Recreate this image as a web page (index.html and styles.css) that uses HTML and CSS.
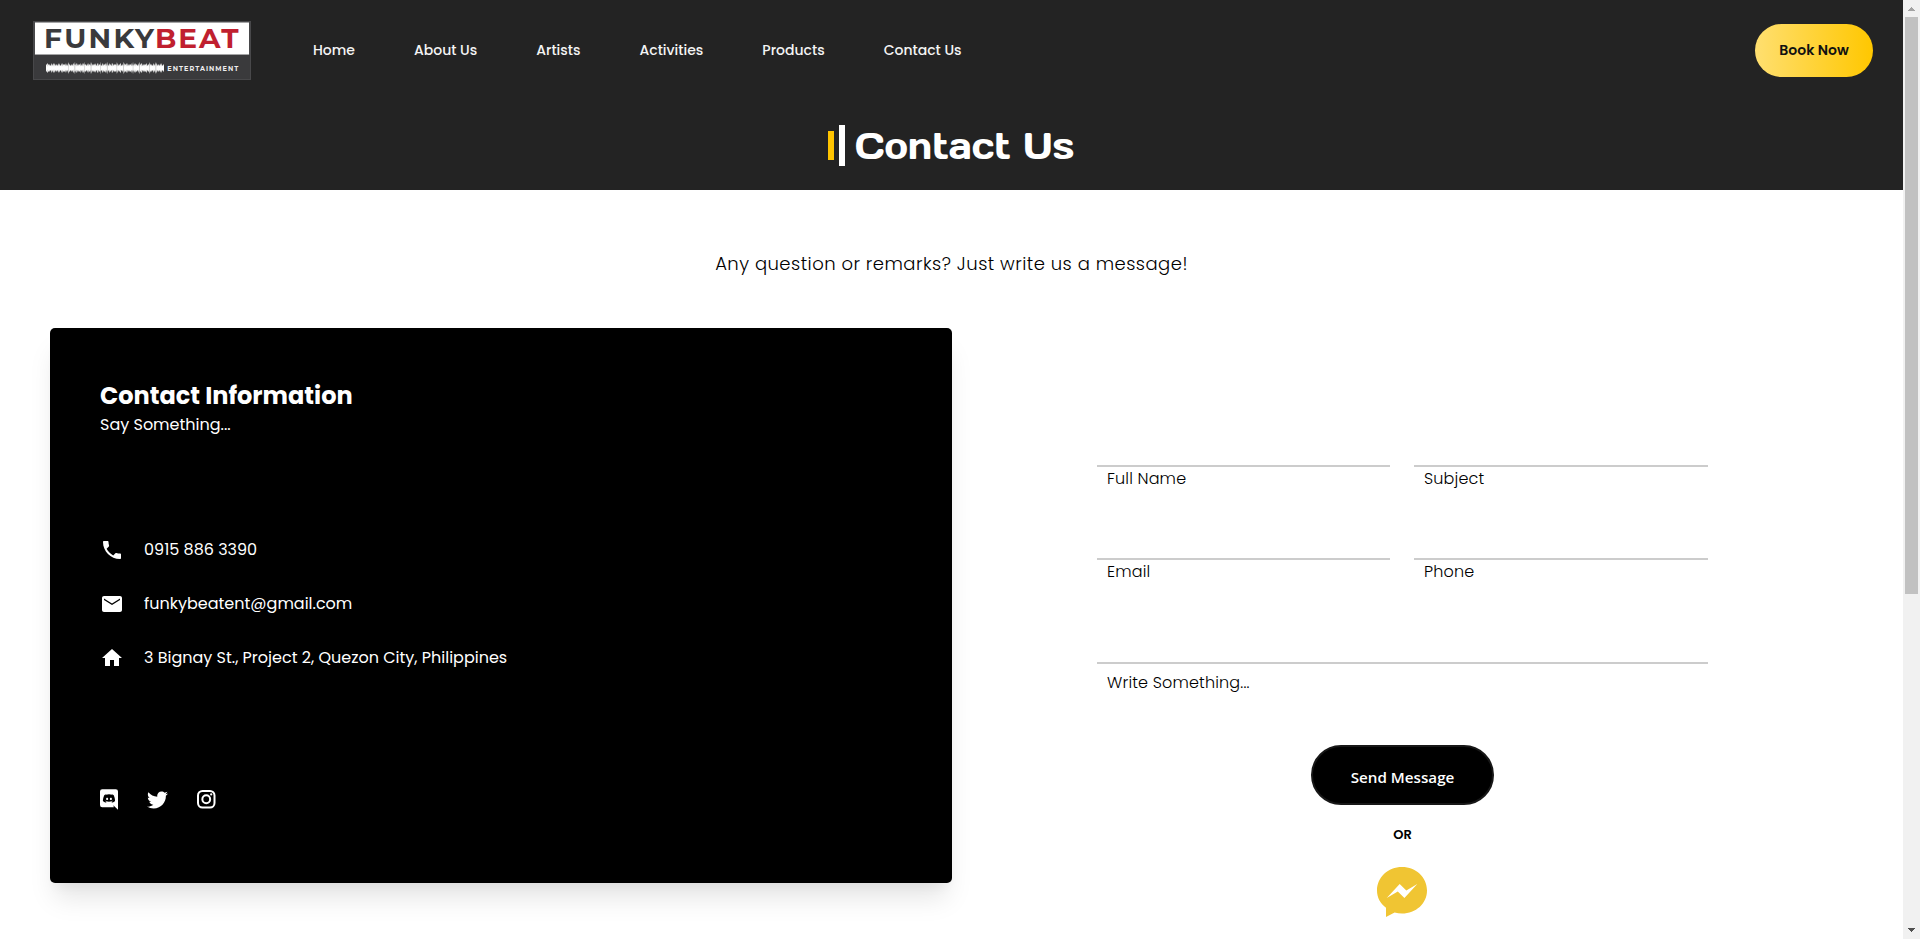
FILE: index.html
```
<!DOCTYPE html>
<html lang="en">
<head>
<meta charset="utf-8">
<title>Contact Us</title>
<link rel="stylesheet" href="styles.css">
</head>
<body>
<div class="page">
  <header class="header">
    <div class="topbar">
      <svg class="logo" width="218" height="59" viewBox="0 0 218 59" role="img" aria-label="Funkybeat Entertainment">
        <rect width="218" height="59" fill="#48484a"/>
        <rect x="1" y="34" width="216" height="24" fill="#3a3a3c"/>
        <rect x="2" y="1.500" width="214" height="32" fill="#fff"/>
        <text class="logo-word logo-dark" x="11" y="27.300" textLength="110" lengthAdjust="spacing">FUNKY</text>
        <text class="logo-word logo-red" x="122" y="27.300" textLength="83.500" lengthAdjust="spacing">BEAT</text>
        <path d="M13 47H131" stroke="#fff" stroke-width="5"/>
        <path d="M13 47H131" stroke="#f4f4f4" stroke-width="7" stroke-dasharray="1 .7 2 1.200 1 .5 3 .8"/>
        <path d="M14 47H130" stroke="#ddd" stroke-width="9" stroke-dasharray="1 3 .6 1.700 1.200 4 .8 2.300"/>
        <path d="M13 47H131" stroke="#fff" stroke-width="3.500"/>
        <path d="M35 47H128" stroke="#bbb" stroke-width="11" stroke-dasharray=".5 6 .7 9"/>
        <text class="logo-sub" x="134.300" y="49.500" textLength="71" lengthAdjust="spacing">ENTERTAINMENT</text>
      </svg>
      <nav class="nav">
        <a>Home</a>
        <a>About Us</a>
        <a>Artists</a>
        <a>Activities</a>
        <a>Products</a>
        <a>Contact Us</a>
      </nav>
      <a class="book">Book Now</a>
    </div>
    <div class="title-row">
      <span class="bar bar-short"></span>
      <span class="bar bar-tall"></span>
      <h1 class="title">Contact Us</h1>
    </div>
  </header>

  <p class="lead">Any question or remarks? Just write us a message!</p>

  <main class="columns">
    <section class="card">
      <h2 class="card-title">Contact Information</h2>
      <p>Say Something...</p>
      <ul class="details">
        <li><svg class="icon" viewBox="0 0 24 24"><path d="M6.62 10.790c1.440 2.830 3.760 5.140 6.590 6.590l2.200-2.200c.27-.27.67-.36 1.020-.24 1.120.37 2.330.57 3.570.57.55 0 1 .45 1 1V20c0 .55-.45 1-1 1-9.390 0-17-7.610-17-17 0-.55.45-1 1-1h3.500c.55 0 1 .45 1 1 0 1.250.2 2.450.57 3.570.11.35.03.74-.25 1.020l-2.200 2.200z"/></svg><span>0915 886 3390</span></li>
        <li><svg class="icon" viewBox="0 0 24 24"><path d="M20 4H4c-1.100 0-1.990.9-1.990 2L2 18c0 1.100.9 2 2 2h16c1.100 0 2-.9 2-2V6c0-1.100-.9-2-2-2zm0 4l-8 5-8-5V6.500l8 5 8-5V8z"/></svg><span>funkybeatent@gmail.com</span></li>
        <li><svg class="icon" viewBox="0 0 24 24"><path d="M10 20v-6h4v6h5v-8h3L12 3 2 12h3v8z"/></svg><span>3 Bignay St., Project 2, Quezon City, Philippines</span></li>
      </ul>
      <div class="social">
        <svg class="discord" viewBox="2 1 20 23"><path d="M22,24L16.750,19L17.380,21H4.500A2.500,2.500 0 0,1 2,18.500V3.500A2.500,2.500 0 0,1 4.500,1H19.500A2.500,2.500 0 0,1 22,3.500V24M12,6.800C9.320,6.800 7.440,7.950 7.440,7.950C8.470,7.030 10.270,6.500 10.270,6.500L10.100,6.330C8.410,6.360 6.880,7.530 6.880,7.530C5.160,11.120 5.270,14.220 5.270,14.220C6.670,16.030 8.750,15.900 8.750,15.900L9.460,15C8.210,14.730 7.420,13.620 7.420,13.620C7.420,13.620 9.300,14.900 12,14.900C14.700,14.900 16.580,13.620 16.580,13.620C16.580,13.620 15.790,14.730 14.540,15L15.250,15.900C15.250,15.900 17.330,16.030 18.730,14.220C18.730,14.220 18.840,11.120 17.120,7.530C17.120,7.530 15.590,6.360 13.900,6.330L13.730,6.500C13.730,6.500 15.530,7.030 16.560,7.950C16.560,7.950 14.680,6.800 12,6.800M9.930,10.590C10.580,10.590 11.110,11.160 11.100,11.860C11.100,12.550 10.580,13.130 9.930,13.130C9.290,13.130 8.770,12.550 8.770,11.860C8.770,11.160 9.280,10.590 9.930,10.590M14.100,10.590C14.750,10.590 15.270,11.160 15.270,11.860C15.270,12.550 14.750,13.130 14.100,13.130C13.460,13.130 12.940,12.550 12.940,11.860C12.940,11.160 13.450,10.590 14.100,10.590Z"/></svg>
        <svg class="twitter" viewBox="0 2 24 20"><path d="M23.954 4.569c-.885.389-1.830.654-2.825.775 1.014-.611 1.794-1.574 2.163-2.723-.951.555-2.005.959-3.127 1.184-.896-.959-2.173-1.559-3.591-1.559-2.717 0-4.920 2.203-4.920 4.917 0 .39.045.765.127 1.124C7.691 8.094 4.066 6.130 1.640 3.161c-.427.722-.666 1.561-.666 2.475 0 1.710.87 3.213 2.188 4.096-.807-.026-1.566-.248-2.228-.616v.061c0 2.385 1.693 4.374 3.946 4.827-.413.111-.849.171-1.296.171-.314 0-.615-.030-.916-.086.631 1.953 2.445 3.377 4.604 3.417-1.680 1.319-3.809 2.105-6.102 2.105-.39 0-.779-.023-1.170-.067 2.189 1.394 4.768 2.209 7.557 2.209 9.054 0 13.999-7.496 13.999-13.986 0-.209 0-.42-.015-.63.961-.689 1.800-1.560 2.460-2.548l-.047-.020z"/></svg>
        <svg class="instagram" viewBox="0 0 19 19"><rect x="1" y="1" width="16.500" height="16.500" rx="4.500"/><circle cx="9.250" cy="9.250" r="3.900"/><circle class="dot" cx="14.200" cy="4.400" r="1.150"/></svg>
      </div>
    </section>

    <form class="form">
      <div class="fields">
        <label class="field"><span class="line"></span><span class="name">Full Name</span></label>
        <label class="field"><span class="line"></span><span class="name">Subject</span></label>
        <label class="field"><span class="line"></span><span class="name">Email</span></label>
        <label class="field"><span class="line"></span><span class="name">Phone</span></label>
      </div>
      <label class="field message"><span class="line"></span><span class="name">Write Something...</span></label>
      <button class="send" type="button">Send Message</button>
      <p class="or">OR</p>
      <svg class="messenger" viewBox="0 0 50 50"><path fill="#f0c533" d="M25 0C11 0 0 10.200 0 23.500c0 7 3.300 13 9 17.200V50l8.600-4.500c2.400.6 4.900.9 7.400.9 14 0 25-10 25-23S39 0 25 0z"/><path fill="#fff" d="M9.700 30.900 22.700 17l6.600 6.600L40.300 17 27.400 30.900l-6.600-6.400z"/></svg>
    </form>
  </main>
</div>
<aside class="scrollbar">
  <svg class="arrow" width="7" height="4" viewBox="0 0 7 4" shape-rendering="crispEdges"><path fill="#a3a3a3" d="M3 0h1v1h1v1h1v1h1v1H0V3h1V2h1V1h1z"/></svg>
  <span class="thumb"></span>
  <svg class="arrow arrow-down" width="7" height="4" viewBox="0 0 7 4" shape-rendering="crispEdges"><path fill="#505050" d="M0 0h7v1H6v1H5v1H4v1H3V3H2V2H1V1H0z"/></svg>
</aside>
</body>
</html>
```

FILE: styles.css
```
* { box-sizing: border-box; }
body {
  margin: 0;
  height: 939px;
  overflow: hidden;
  display: flex;
  background: #fff;
  color: #000;
  font-family: Poppins, Inter, sans-serif;
  font-size: 16px;
  line-height: 24px;
}
h1, h2, p, ul { margin: 0; padding: 0; }
.page { flex: 1; min-width: 0; }

.header { height: 190px; background: #232323; color: #fff; }
.topbar { display: flex; align-items: center; height: 100px; padding: 0 30px 0 33px; }
.logo { flex: none; }
.logo-word { font: 700 28px Montserrat, Inter, sans-serif; }
.logo-dark { fill: #3a3a3c; }
.logo-red { fill: #c01f2f; }
.logo-sub { font: 700 6.500px Montserrat, Inter, sans-serif; fill: #eee; }
.nav { display: flex; flex: 1; gap: 59px; padding-left: 62px; font-size: 14px; font-weight: 500; color: #f4f4f4; }
.nav a { flex: none; white-space: nowrap; }
.book {
  width: 118px;
  height: 53px;
  margin-top: 1px;
  border-radius: 27px;
  background: linear-gradient(90deg, #ffdf70, #ffc700);
  color: #111;
  font-size: 14px;
  font-weight: 600;
  line-height: 53px;
  text-align: center;
}
.title-row { display: flex; align-items: center; height: 91px; padding-left: 828px; }
.bar { width: 6px; margin-right: 5px; }
.bar-short { height: 29px; background: #ffc400; }
.bar-tall { height: 41px; margin-right: 10px; background: #fff; }
.title { padding-top: 1px; font: 400 36px/41px "Days One", "DejaVu Sans", sans-serif; white-space: nowrap; }

.lead {
  padding-top: 61px;
  height: 138px;
  font-size: 18px;
  font-weight: 300;
  letter-spacing: .47px;
  line-height: 25px;
  text-align: center;
}

.columns { display: grid; grid-template-columns: 902px 611px; column-gap: 145px; padding-left: 50px; }
.card {
  height: 555px;
  padding: 51px 50px;
  border-radius: 5px;
  background: #000;
  color: #fff;
  box-shadow: 0 20px 25px -5px rgba(0, 0, 0, .1), 0 10px 10px -5px rgba(0, 0, 0, .04);
}
.card-title { font-size: 24px; line-height: 34px; }
.details { display: grid; gap: 30px; margin-top: 101px; list-style: none; }
.details li { display: flex; align-items: center; gap: 20px; }
.icon { width: 24px; height: 24px; fill: #fff; }
.social { display: flex; margin-top: 119px; align-items: center; fill: #fff; }
.discord { width: 18px; height: 21px; margin-right: 29px; }
.twitter { width: 21px; height: 18px; margin-right: 29px; }
.instagram { width: 19px; height: 19px; fill: none; stroke: #fff; stroke-width: 2; }
.instagram .dot { fill: #fff; stroke: none; }

.form { display: flex; flex-direction: column; align-items: center; padding-top: 92px; }
.fields { display: grid; grid-template-columns: 293px 294px; column-gap: 24px; row-gap: 22px; width: 611px; }
.field { display: block; font-weight: 300; letter-spacing: .16px; }
.line { display: block; height: 47px; border-bottom: 2px solid #ccc; }
.name { display: block; padding-left: 10px; }
.message { width: 611px; }
.message .line { height: 80px; }
.message .name { padding-top: 7px; }
.send {
  width: 183px;
  height: 60px;
  margin-top: 50px;
  padding: 3px 0 0;
  border: 2px solid #171717;
  border-radius: 30px;
  background: #000;
  color: #fff;
  font: 600 15.200px "Open Sans", sans-serif;
}
.or { margin-top: 18px; font-size: 13px; font-weight: 600; }
.messenger { width: 50px; height: 50px; margin: 20px 2px 0 0; }

.scrollbar { display: flex; flex-direction: column; align-items: center; width: 17px; height: 939px; padding: 7px 0; background: #f1f1f1; }
.arrow { flex: none; }
.thumb { width: 13px; height: 577px; margin-top: 6px; background: #c1c1c1; }
.arrow-down { margin-top: auto; }
```
